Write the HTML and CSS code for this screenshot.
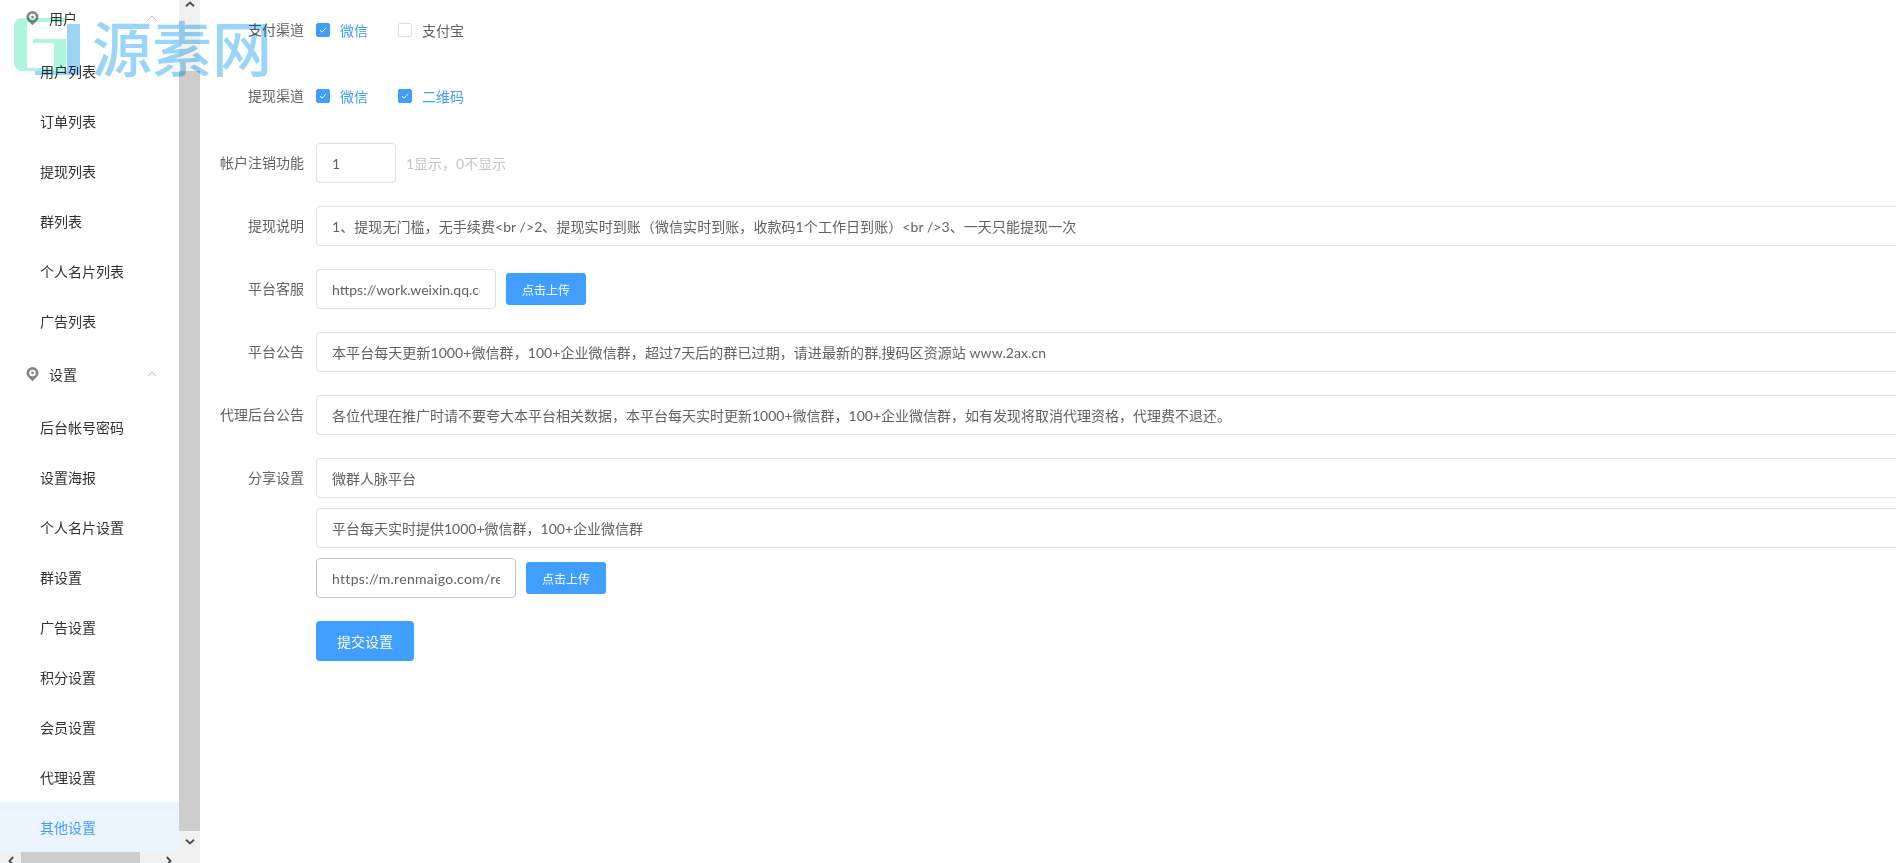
FILE: index.html
```html
<!DOCTYPE html>
<html lang="zh-CN">
<head>
<meta charset="utf-8">
<title>其他设置</title>
<link rel="stylesheet" href="styles.css">
</head>
<body>
<div class="app">
  <aside class="sidebar">
    <div class="side-scroll">
      <nav class="menu">
        <div class="menu-head first">
          <svg class="pin" viewBox="0 0 14 16"><path d="M7 .5a6.500 6.500 0 0 0-6.500 6.500c0 3.500 3.700 6 6.500 8.800 2.800-2.800 6.500-5.300 6.500-8.800A6.500 6.500 0 0 0 7 .5z" fill="#85858c"/><circle cx="7" cy="6.800" r="3.500" fill="#fff"/><circle cx="7" cy="6.800" r="1.500" fill="#85858c"/></svg>
          <span class="head-text">用户</span>
          <svg class="chev" viewBox="0 0 10 6"><path d="M.7 5.300 5 1l4.300 4.300" fill="none" stroke="#b9b9c0" stroke-width="1"/></svg>
        </div>
        <a class="item">用户列表</a>
        <a class="item">订单列表</a>
        <a class="item">提现列表</a>
        <a class="item">群列表</a>
        <a class="item">个人名片列表</a>
        <a class="item">广告列表</a>
        <div class="menu-head">
          <svg class="pin" viewBox="0 0 14 16"><path d="M7 .5a6.500 6.500 0 0 0-6.500 6.500c0 3.500 3.700 6 6.500 8.800 2.800-2.800 6.500-5.300 6.500-8.800A6.500 6.500 0 0 0 7 .5z" fill="#85858c"/><circle cx="7" cy="6.800" r="3.500" fill="#fff"/><circle cx="7" cy="6.800" r="1.500" fill="#85858c"/></svg>
          <span class="head-text">设置</span>
          <svg class="chev" viewBox="0 0 10 6"><path d="M.7 5.300 5 1l4.300 4.300" fill="none" stroke="#b9b9c0" stroke-width="1"/></svg>
        </div>
        <a class="item">后台帐号密码</a>
        <a class="item">设置海报</a>
        <a class="item">个人名片设置</a>
        <a class="item">群设置</a>
        <a class="item">广告设置</a>
        <a class="item">积分设置</a>
        <a class="item">会员设置</a>
        <a class="item">代理设置</a>
        <a class="item active">其他设置</a>
      </nav>
      <div class="vbar">
        <div class="vbtn"><svg viewBox="0 0 10 6"><path d="M1 5.200 5 1.500l4 3.700" fill="none" stroke="#505050" stroke-width="2"/></svg></div>
        <div class="vtrack"><div class="vthumb"></div></div>
        <div class="vbtn"><svg viewBox="0 0 10 6"><path d="M1 .8 5 4.500 9 .8" fill="none" stroke="#505050" stroke-width="2"/></svg></div>
      </div>
    </div>
    <div class="hbar">
      <div class="hbtn"><svg viewBox="0 0 6 10"><path d="M5.200 1 1.500 5l3.700 4" fill="none" stroke="#505050" stroke-width="2"/></svg></div>
      <div class="htrack"><div class="hthumb"></div></div>
      <div class="hbtn"><svg viewBox="0 0 6 10"><path d="M.8 1 4.500 5 .8 9" fill="none" stroke="#505050" stroke-width="2"/></svg></div>
    </div>
  </aside>
  <main class="main">
    <div class="row check-row first-row">
      <label class="label">支付渠道</label>
      <div class="controls checks">
        <span class="check on"><i class="box"><svg viewBox="0 0 14 14"><path d="M3.500 7.200 6 9.500l4.500-5" fill="none" stroke="#fff" stroke-width="1.100"/></svg></i>微信</span>
        <span class="check"><i class="box"></i>支付宝</span>
      </div>
    </div>
    <div class="row check-row second-row">
      <label class="label">提现渠道</label>
      <div class="controls checks">
        <span class="check on"><i class="box"><svg viewBox="0 0 14 14"><path d="M3.500 7.200 6 9.500l4.500-5" fill="none" stroke="#fff" stroke-width="1.100"/></svg></i>微信</span>
        <span class="check on"><i class="box"><svg viewBox="0 0 14 14"><path d="M3.500 7.200 6 9.500l4.500-5" fill="none" stroke="#fff" stroke-width="1.100"/></svg></i>二维码</span>
      </div>
    </div>
    <div class="row">
      <label class="label">帐户注销功能</label>
      <div class="controls">
        <input class="input w80" readonly value="1">
        <span class="hint">1显示，0不显示</span>
      </div>
    </div>
    <div class="row">
      <label class="label">提现说明</label>
      <div class="controls"><input class="input wide loose" readonly value="1、提现无门槛，无手续费&lt;br /&gt;2、提现实时到账（微信实时到账，收款码1个工作日到账）&lt;br /&gt;3、一天只能提现一次"></div>
    </div>
    <div class="row">
      <label class="label">平台客服</label>
      <div class="controls">
        <input class="input w180" readonly value="https://work.weixin.qq.com/kfid">
        <button class="btn-small">点击上传</button>
      </div>
    </div>
    <div class="row">
      <label class="label">平台公告</label>
      <div class="controls"><input class="input wide loose" readonly value="本平台每天更新1000+微信群，100+企业微信群，超过7天后的群已过期，请进最新的群,搜码区资源站 www.2ax.cn"></div>
    </div>
    <div class="row">
      <label class="label">代理后台公告</label>
      <div class="controls"><input class="input wide" readonly value="各位代理在推广时请不要夸大本平台相关数据，本平台每天实时更新1000+微信群，100+企业微信群，如有发现将取消代理资格，代理费不退还。"></div>
    </div>
    <div class="row share">
      <label class="label">分享设置</label>
      <div class="controls stack">
        <input class="input wide" readonly value="微群人脉平台">
        <input class="input wide" readonly value="平台每天实时提供1000+微信群，100+企业微信群">
        <div class="inline">
          <input class="input w200 focus" readonly value="https://m.renmaigo.com/res/share">
          <button class="btn-small">点击上传</button>
        </div>
      </div>
    </div>
    <div class="row submit-row">
      <div class="label"></div>
      <div class="controls"><button class="btn-submit">提交设置</button></div>
    </div>
  </main>
</div>
<div class="watermark">
  <svg class="wm-logo" viewBox="0 0 66 57"><path d="M52 0H8a8 8 0 0 0-8 8v37a8 8 0 0 0 8 8h31v-3H13V4h39z M19 21h33v32H39v-3h1V25H19z" fill="#aef5dc"/><path d="M53 6h13v51H21v-4h32z" fill="#9ad4f7"/></svg>
  <span class="wm-text">源素网</span>
</div>
</body>
</html>
```
FILE: styles.css
```css
html, body { margin: 0; padding: 0; height: 100%; overflow: hidden; background: #fff; }
body { font-family: "Lato", "Noto Sans CJK SC", sans-serif; font-size: 14px; color: #606266; }
.app { display: flex; height: 863px; width: 1896px; overflow: hidden; position: relative; }

.sidebar { width: 200px; flex: none; display: flex; flex-direction: column; }
.side-scroll { display: flex; height: 852px; flex: none; overflow: hidden; }
.menu { width: 179px; flex: none; color: #303133; }
.menu-head { height: 56px; display: flex; align-items: center; padding-left: 26px; box-sizing: border-box; }
.menu-head.first { margin-top: -10px; }
.pin { width: 13px; height: 16px; margin-right: 10px; flex: none; }
.head-text { flex: 1; }
.chev { width: 10px; height: 6px; margin-right: 22px; flex: none; }
.item { display: flex; align-items: center; height: 50px; padding-left: 40px; }
.item.active { background: #ecf5ff; color: #409eff; }

.vbar { width: 21px; flex: none; display: flex; flex-direction: column; background: #f1f1f1; margin-top: -7px; }
.vbtn { height: 21px; display: flex; align-items: center; justify-content: center; flex: none; }
.vbtn svg { width: 10px; height: 6px; }
.vtrack { flex: 1; display: flex; flex-direction: column; justify-content: flex-end; }
.vthumb { height: 760px; background: #cdcdcd; }

.hbar { height: 17px; flex: none; display: flex; background: #f1f1f1; width: 200px; padding-right: 21px; box-sizing: border-box; }
.hbtn { width: 21px; flex: none; display: flex; align-items: center; justify-content: center; overflow: hidden; }
.hbtn svg { width: 6px; height: 10px; }
.htrack { flex: 1; }
.hthumb { width: 119px; height: 100%; background: #cdcdcd; }

.main { flex: 1; min-width: 0; overflow: hidden; }
.row { display: flex; margin-bottom: 23px; align-items: flex-start; }
.check-row { margin-bottom: 26px; }
.first-row { margin-top: 10px; }
.second-row { margin-bottom: 27px; }
.label { width: 104px; flex: none; text-align: right; line-height: 40px; padding-right: 12px; white-space: nowrap; }
.controls { flex: 1; min-width: 0; display: flex; align-items: center; min-height: 40px; }
.checks { gap: 30px; }
.check { display: inline-flex; align-items: center; min-width: 52px; }
.check .box { width: 14px; height: 14px; border: 1px solid #dcdfe6; border-radius: 2px; box-sizing: border-box; margin-right: 10px; display: block; background: #fff; }
.check.on { color: #409eff; }
.check.on .box { background: #409eff; border-color: #409eff; }
.box svg { display: block; width: 12px; height: 12px; }

.input { height: 40px; box-sizing: border-box; border: 1px solid #dcdfe6; border-radius: 4px; background: #fff; padding: 0 15px; color: #606266; outline: none; font-family: "Lato", "Noto Sans CJK SC", sans-serif; font-size: 14px; margin: 0; display: block; }
.input.loose { letter-spacing: .07px; }
.input.focus { border-color: #c0c4cc; letter-spacing: .3px; }
.w80 { width: 80px; flex: none; }
.w180 { width: 180px; flex: none; }
.w200 { width: 200px; flex: none; }
.wide { width: 1640px; flex: none; }
.hint { margin-left: 10px; color: #c0c4cc; }
.btn-small { margin-left: 10px; width: 80px; height: 32px; border: 0; border-radius: 3px; background: #409eff; color: #fff; font-size: 12px; font-family: inherit; padding: 0; }
.stack { flex-direction: column; align-items: flex-start; gap: 10px; }
.inline { display: flex; align-items: center; }
.btn-submit { width: 98px; height: 40px; border: 0; border-radius: 4px; background: #409eff; color: #fff; font-size: 14px; font-family: inherit; padding: 0; }

.watermark { position: absolute; left: 14px; top: 18px; display: flex; align-items: flex-start; pointer-events: none; mix-blend-mode: multiply; }
.wm-logo { width: 66px; height: 57px; flex: none; }
.wm-text { margin-left: 12px; margin-top: -7px; font-family: "Noto Sans CJK SC", sans-serif; font-size: 60px; line-height: 70px; color: #98d5f8; font-weight: 500; white-space: nowrap; }
```
